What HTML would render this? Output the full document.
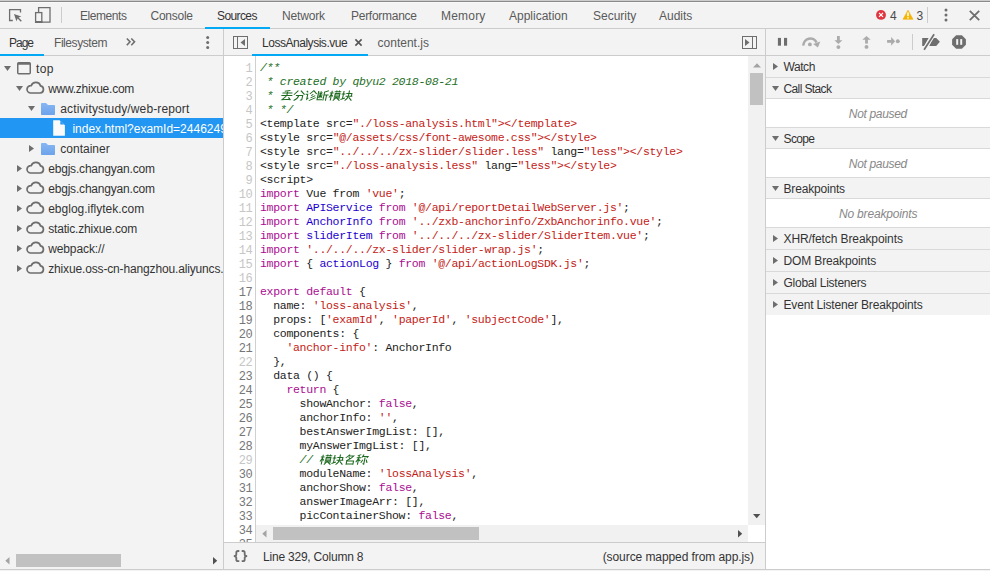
<!DOCTYPE html>
<html><head><meta charset="utf-8">
<style>
*{box-sizing:border-box;margin:0;padding:0}
html,body{width:990px;height:571px;overflow:hidden;background:#f3f3f3;font-family:"Liberation Sans",sans-serif;font-size:12px;color:#333}
.a{position:absolute}
.t{position:absolute;white-space:nowrap;line-height:14px}
.hl{position:absolute;height:1px;background:#ccc}
.vl{position:absolute;width:1px;background:#ccc}
svg{position:absolute;overflow:visible}
#code{position:absolute;left:224px;top:56px;width:524px;height:486px;background:#fff;overflow:hidden}
#gut{position:absolute;left:31px;top:0;width:1px;height:486px;background:#d0d0d0}
.ln{position:absolute;left:0;width:28px;text-align:right;font-family:"Liberation Mono",monospace;font-size:12px;letter-spacing:-0.6px;line-height:14px;margin-top:1px;color:#767676}
.cl{position:absolute;left:36px;white-space:pre;font-family:"Liberation Mono",monospace;font-size:11.5px;letter-spacing:-0.3px;line-height:14px;color:#222}
.c{color:#236e25;font-style:italic}
.s{color:#c41a16}
.k{color:#aa0d91}
.v{color:#1c00cf}
.sec{position:absolute;left:766px;width:224px;height:22px;background:#f3f3f3;border-bottom:1px solid #d9d9d9}
.sec .t{left:19px;top:4px;color:#333}
.emp{position:absolute;left:766px;width:224px;height:29px;line-height:28px;background:#fff;border-bottom:1px solid #d9d9d9;text-align:center;font-style:italic;color:#888}
</style></head><body>
<div class="a" style="left:0;top:0;width:990px;height:1px;background:#cdcdcd"></div>
<div class="a" style="left:0;top:1px;width:990px;height:1px;background:#8a8a8a"></div>
<div class="a" style="left:0;top:2px;width:990px;height:1px;background:#f9f9f9"></div>
<div class="hl" style="left:0;top:28px;width:990px"></div>

<!-- inspect / device icons -->
<svg style="left:9px;top:9px" width="14" height="14"><path d="M3.8,11.5 H0.6 V0.6 H11.5 V3.6" fill="none" stroke="#6e6e6e" stroke-width="1.3"/><path d="M5,5 L12.3,7.4 L9.6,8.6 L12.8,11.8 L11.8,12.8 L8.6,9.6 L7.4,12.3 Z" fill="#6e6e6e"/></svg>
<svg style="left:35px;top:7px" width="16" height="16"><path d="M3.6,5.5 V0.6 H15 V15.2 H7" fill="none" stroke="#6e6e6e" stroke-width="1.3"/><rect x="0.6" y="5.6" width="6.2" height="9.6" fill="none" stroke="#6e6e6e" stroke-width="1.3"/><rect x="0" y="14" width="7.4" height="2" fill="#6e6e6e"/></svg>
<div class="vl" style="left:61px;top:7px;height:16px"></div>

<div class="t" style="left:80px;top:9px;color:#5a5a5a;letter-spacing:-0.43px">Elements</div>
<div class="t" style="left:150.5px;top:9px;color:#5a5a5a;letter-spacing:-0.25px">Console</div>
<div class="t" style="left:217px;top:9px;color:#333;letter-spacing:-0.60px">Sources</div>
<div class="t" style="left:282px;top:9px;color:#5a5a5a;letter-spacing:-0.17px">Network</div>
<div class="t" style="left:351px;top:9px;color:#5a5a5a;letter-spacing:-0.27px">Performance</div>
<div class="t" style="left:441px;top:9px;color:#5a5a5a;letter-spacing:0.20px">Memory</div>
<div class="t" style="left:509px;top:9px;color:#5a5a5a">Application</div>
<div class="t" style="left:593px;top:9px;color:#5a5a5a">Security</div>
<div class="t" style="left:659px;top:9px;color:#5a5a5a">Audits</div>
<div class="a" style="left:205px;top:27px;width:65px;height:2px;background:#03a9f4"></div>

<!-- errors/warnings -->
<svg style="left:876px;top:10px" width="11" height="11"><circle cx="5" cy="4.9" r="4.95" fill="#e0353e"/><path d="M3,2.9 L7,6.9 M7,2.9 L3,6.9" stroke="#fff" stroke-width="1.2"/></svg>
<div class="t" style="left:890px;top:9px;color:#4a4a4a">4</div>
<svg style="left:903px;top:10px" width="11" height="10"><path d="M5,0.2 L10,9.3 H0 Z" fill="#f4b400" stroke="#f4b400" stroke-width="0.6" stroke-linejoin="round"/><path d="M5,2.6 V6.3 M5,7.3 V8.4" stroke="#fff" stroke-width="1.6"/></svg>
<div class="t" style="left:916.6px;top:9px;color:#4a4a4a">3</div>
<div class="vl" style="left:927px;top:7px;height:16px"></div>
<svg style="left:944px;top:8px" width="4" height="14"><circle cx="2" cy="2" r="1.5" fill="#6e6e6e"/><circle cx="2" cy="7" r="1.5" fill="#6e6e6e"/><circle cx="2" cy="12" r="1.5" fill="#6e6e6e"/></svg>
<svg style="left:969px;top:10px" width="11" height="11"><path d="M0.8,0.8 L10.2,10.2 M10.2,0.8 L0.8,10.2" stroke="#6e6e6e" stroke-width="1.8"/></svg>

<!-- second row -->
<div class="hl" style="left:0;top:55px;width:990px"></div>
<div class="vl" style="left:223px;top:29px;height:540px"></div>
<div class="vl" style="left:765px;top:29px;height:540px"></div>
<div class="t" style="left:9px;top:36px;color:#333;letter-spacing:-1.00px">Page</div>
<div class="t" style="left:54px;top:36px;color:#5a5a5a;letter-spacing:-0.44px">Filesystem</div>
<div class="a" style="left:0;top:54px;width:44px;height:2px;background:#03a9f4"></div>
<svg style="left:126px;top:38px" width="10" height="8"><path d="M0.8,0.5 L4,3.8 L0.8,7.2 M5.3,0.5 L8.5,3.8 L5.3,7.2" fill="none" stroke="#6e6e6e" stroke-width="1.6"/></svg>
<svg style="left:206px;top:36px" width="4" height="13"><circle cx="1.7" cy="1.6" r="1.5" fill="#6e6e6e"/><circle cx="1.7" cy="6.4" r="1.5" fill="#6e6e6e"/><circle cx="1.7" cy="11.4" r="1.5" fill="#6e6e6e"/></svg>

<!-- editor tabs -->
<svg style="left:233px;top:36px" width="16" height="14"><rect x="0.5" y="0.5" width="14" height="12" fill="none" stroke="#6e6e6e" stroke-width="1"/><path d="M4.5,0.5 V12.5" stroke="#6e6e6e" stroke-width="1"/><path d="M12,3 V10 L7.5,6.5 Z" fill="#6e6e6e"/></svg>
<div class="t" style="left:262px;top:36px;color:#333;letter-spacing:-0.47px">LossAnalysis.vue</div>
<svg style="left:355px;top:38.5px" width="8" height="8"><path d="M0.4,0.4 L6.6,6.6 M6.6,0.4 L0.4,6.6" stroke="#555" stroke-width="1.6"/></svg>
<div class="t" style="left:377.6px;top:36px;color:#5a5a5a">content.js</div>
<div class="a" style="left:252px;top:54px;width:116px;height:2px;background:#03a9f4"></div>
<svg style="left:742px;top:36px" width="16" height="14"><rect x="0.5" y="0.5" width="14" height="12" fill="none" stroke="#6e6e6e" stroke-width="1"/><path d="M10.5,0.5 V12.5" stroke="#6e6e6e" stroke-width="1"/><path d="M3,3 V10 L7.5,6.5 Z" fill="#6e6e6e"/></svg>

<!-- debugger toolbar -->
<div class="vl" style="left:912px;top:34px;height:16px"></div>
<svg style="left:766px;top:28px" width="224" height="27" viewBox="766 28 224 27">
<rect x="777.9" y="37.9" width="3.1" height="7.8" fill="#6e6e6e"/><rect x="784" y="37.9" width="3.1" height="7.8" fill="#6e6e6e"/>
<path d="M803.4,45.6 A6.9,6.9 0 0 1 816.6,42.6" fill="none" stroke="#ababab" stroke-width="2.5"/>
<path d="M813.2,43.9 L820.3,41.6 L817.9,47.4 Z" fill="#ababab"/>
<circle cx="809.9" cy="44.4" r="1.9" fill="#ababab"/>
<path d="M838.4,36 V41" stroke="#ababab" stroke-width="2.8"/><path d="M834.4,40.2 H842.4 L838.4,44 Z" fill="#ababab"/><circle cx="838.4" cy="47.1" r="1.95" fill="#ababab"/>
<path d="M866.5,39 V43.6" stroke="#ababab" stroke-width="2.8"/><path d="M862.3,39.7 H870.7 L866.5,35.9 Z" fill="#ababab"/><circle cx="866.5" cy="46.9" r="1.95" fill="#ababab"/>
<path d="M887.1,41.4 H892" stroke="#ababab" stroke-width="2.8"/><path d="M891.1,37 V45.7 L895.1,41.35 Z" fill="#ababab"/><circle cx="897.8" cy="41.3" r="1.95" fill="#ababab"/>
<path d="M922.2,37.9 H928.6 L924.1,45.9 H922.2 Z M932.9,37.9 H936.2 L939.9,41.8 L936.2,45.9 H929.2 Z" fill="#6e6e6e"/>
<path d="M934.1,34.2 L924.1,49.7" stroke="#f3f3f3" stroke-width="3.8"/><path d="M934.1,34.2 L924.1,49.7" stroke="#6e6e6e" stroke-width="1.7"/>
<path d="M956.1,35.2 H961.9 L965.9,39.2 V44.8 L961.9,48.8 H956.1 L952.1,44.8 V39.2 Z" fill="#6e6e6e"/>
<rect x="956.2" y="39.1" width="2" height="5.7" fill="#f3f3f3"/><rect x="960.2" y="39.1" width="2" height="5.7" fill="#f3f3f3"/>
</svg>

<!-- left sidebar tree -->
<div class="a" style="left:0;top:0;width:223px;height:571px;overflow:hidden"><svg style="left:4px;top:66px" width="8" height="6"><path d="M0,0 H7 L3.5,5 Z" fill="#6e6e6e"/></svg>
<svg style="left:17px;top:62px" width="14" height="13"><rect x="0.75" y="0.75" width="12.5" height="11" rx="1" fill="none" stroke="#6e6e6e" stroke-width="1.5"/><rect x="0.75" y="0.75" width="12.5" height="2" fill="#6e6e6e"/></svg>
<div class="t" style="left:36px;top:62px;color:#333;letter-spacing:0.40px">top</div>
<svg style="left:16px;top:86px" width="8" height="6"><path d="M0,0 H7 L3.5,5 Z" fill="#6e6e6e"/></svg>
<svg style="left:26px;top:82px" width="19" height="12" viewBox="0 0 19 12"><path d="M4.3,11 H14.2 A3.6,3.6 0 0 0 14.6,3.9 A5,5 0 0 0 5.2,3.6 A3.7,3.7 0 0 0 4.3,11 Z" fill="none" stroke="#6e6e6e" stroke-width="1.7"/></svg>
<div class="t" style="left:48.2px;top:82px;color:#333;letter-spacing:-0.25px">www.zhixue.com</div>
<svg style="left:28px;top:106px" width="8" height="6"><path d="M0,0 H7 L3.5,5 Z" fill="#6e6e6e"/></svg>
<svg style="left:41px;top:103px" width="14" height="12"><defs><linearGradient id="fg109" x1="0" y1="0" x2="0" y2="1"><stop offset="0" stop-color="#86b6f3"/><stop offset="1" stop-color="#6da3eb"/></linearGradient></defs><path d="M0.8,0 H5 L7,2 H13.2 Q14,2 14,2.8 V11.2 Q14,12 13.2,12 H0.8 Q0,12 0,11.2 V0.8 Q0,0 0.8,0 Z" fill="url(#fg109)"/></svg>
<div class="t" style="left:60.3px;top:102px;color:#333;letter-spacing:0.13px">activitystudy/web-report</div>
<div class="a" style="left:0;top:118px;width:223px;height:20px;background:#2196f3"></div>
<svg style="left:53px;top:120px" width="13" height="16"><path d="M0.2,0.3 H6.6 L11.9,5.2 V15.7 H0.2 Z" fill="#fafafa"/><path d="M7.3,0.9 V4.4 H11 Z" fill="#2196f3"/></svg>
<div class="t" style="left:72.4px;top:122px;color:#fff">index.html?examId=2446249</div>
<svg style="left:29px;top:145px" width="6" height="8"><path d="M0,0 V7 L5,3.5 Z" fill="#6e6e6e"/></svg>
<svg style="left:41px;top:143px" width="14" height="12"><defs><linearGradient id="fg149" x1="0" y1="0" x2="0" y2="1"><stop offset="0" stop-color="#86b6f3"/><stop offset="1" stop-color="#6da3eb"/></linearGradient></defs><path d="M0.8,0 H5 L7,2 H13.2 Q14,2 14,2.8 V11.2 Q14,12 13.2,12 H0.8 Q0,12 0,11.2 V0.8 Q0,0 0.8,0 Z" fill="url(#fg149)"/></svg>
<div class="t" style="left:60.3px;top:142px;color:#333">container</div>
<svg style="left:17px;top:165px" width="6" height="8"><path d="M0,0 V7 L5,3.5 Z" fill="#6e6e6e"/></svg>
<svg style="left:26px;top:162px" width="19" height="12" viewBox="0 0 19 12"><path d="M4.3,11 H14.2 A3.6,3.6 0 0 0 14.6,3.9 A5,5 0 0 0 5.2,3.6 A3.7,3.7 0 0 0 4.3,11 Z" fill="none" stroke="#6e6e6e" stroke-width="1.7"/></svg>
<div class="t" style="left:48.2px;top:162px;color:#333;letter-spacing:-0.19px">ebgjs.changyan.com</div>
<svg style="left:17px;top:185px" width="6" height="8"><path d="M0,0 V7 L5,3.5 Z" fill="#6e6e6e"/></svg>
<svg style="left:26px;top:182px" width="19" height="12" viewBox="0 0 19 12"><path d="M4.3,11 H14.2 A3.6,3.6 0 0 0 14.6,3.9 A5,5 0 0 0 5.2,3.6 A3.7,3.7 0 0 0 4.3,11 Z" fill="none" stroke="#6e6e6e" stroke-width="1.7"/></svg>
<div class="t" style="left:48.2px;top:182px;color:#333;letter-spacing:-0.19px">ebgjs.changyan.com</div>
<svg style="left:17px;top:205px" width="6" height="8"><path d="M0,0 V7 L5,3.5 Z" fill="#6e6e6e"/></svg>
<svg style="left:26px;top:202px" width="19" height="12" viewBox="0 0 19 12"><path d="M4.3,11 H14.2 A3.6,3.6 0 0 0 14.6,3.9 A5,5 0 0 0 5.2,3.6 A3.7,3.7 0 0 0 4.3,11 Z" fill="none" stroke="#6e6e6e" stroke-width="1.7"/></svg>
<div class="t" style="left:48.2px;top:202px;color:#333">ebglog.iflytek.com</div>
<svg style="left:17px;top:225px" width="6" height="8"><path d="M0,0 V7 L5,3.5 Z" fill="#6e6e6e"/></svg>
<svg style="left:26px;top:222px" width="19" height="12" viewBox="0 0 19 12"><path d="M4.3,11 H14.2 A3.6,3.6 0 0 0 14.6,3.9 A5,5 0 0 0 5.2,3.6 A3.7,3.7 0 0 0 4.3,11 Z" fill="none" stroke="#6e6e6e" stroke-width="1.7"/></svg>
<div class="t" style="left:48.2px;top:222px;color:#333;letter-spacing:-0.19px">static.zhixue.com</div>
<svg style="left:17px;top:245px" width="6" height="8"><path d="M0,0 V7 L5,3.5 Z" fill="#6e6e6e"/></svg>
<svg style="left:26px;top:242px" width="19" height="12" viewBox="0 0 19 12"><path d="M4.3,11 H14.2 A3.6,3.6 0 0 0 14.6,3.9 A5,5 0 0 0 5.2,3.6 A3.7,3.7 0 0 0 4.3,11 Z" fill="none" stroke="#6e6e6e" stroke-width="1.7"/></svg>
<div class="t" style="left:48.2px;top:242px;color:#333;letter-spacing:-0.11px">webpack://</div>
<svg style="left:17px;top:265px" width="6" height="8"><path d="M0,0 V7 L5,3.5 Z" fill="#6e6e6e"/></svg>
<svg style="left:26px;top:262px" width="19" height="12" viewBox="0 0 19 12"><path d="M4.3,11 H14.2 A3.6,3.6 0 0 0 14.6,3.9 A5,5 0 0 0 5.2,3.6 A3.7,3.7 0 0 0 4.3,11 Z" fill="none" stroke="#6e6e6e" stroke-width="1.7"/></svg>
<div class="t" style="left:48.2px;top:262px;color:#333;letter-spacing:-0.15px">zhixue.oss-cn-hangzhou.aliyuncs.com</div></div>
<!-- left h scrollbar -->
<svg style="left:5px;top:557px" width="5" height="8"><path d="M4.5,0 V7.5 L0.3,3.75 Z" fill="#a3a3a3"/></svg>
<div class="a" style="left:16px;top:554px;width:105px;height:13px;background:#c1c1c1"></div>
<svg style="left:213px;top:557px" width="5" height="8"><path d="M0,0 V7.5 L4.2,3.75 Z" fill="#505050"/></svg>

<!-- editor -->
<div id="code">
<div id="gut"></div>
<svg style="left:55.8px;top:33.5px" width="76" height="12" viewBox="0 0 76 12"><g transform="translate(0,0.2) skewX(-12) translate(2,0) scale(1,0.9)" fill="none" stroke="#1f6b21" stroke-width="1.1"><path transform="translate(0,0)" d="M3,1.2 L8.5,0.3 M1,3 H11 M6,0.8 V6 M0.5,6 H11.5 M5.5,6.5 L2,10.5 L10,10 M8,8 L10.5,11"/><path transform="translate(12,0)" d="M4.5,0.5 L0.8,5 M7,0.5 L11.5,5 M3,5.8 H9.8 V10.2 Q9.8,11.2 8,11 M6,5.8 Q5.6,9.5 1.8,11.5"/><path transform="translate(24,0)" d="M1,0.8 L2.6,2.4 M0.5,4.5 H2.6 V10 L4,8.6 M8,0.5 L4.6,4.2 M8,0.5 L11.5,4.2 M8.2,4.6 L6.4,6 M10.4,6 L6.2,8.6 M11.2,8.2 L5,11.6"/><path transform="translate(36,0)" d="M1,1 V10.5 H6 M2,2.8 L3,4 M5,2.6 L4,4 M1.6,5.2 H5.6 M3.5,1.2 V9 M3.5,5.6 L1.6,8.4 M3.5,5.6 L5.6,8.2 M11,0.6 L7,2 V11.4 M7,5.2 H11.6 M9.6,5.2 V11.6"/><path transform="translate(48,0)" d="M0.5,3.2 H4.2 M2.4,0.5 V11.5 M2.4,4 L0.5,8.2 M2.6,5 L4.2,7 M5,1.6 H11.6 M7,0.4 V2.6 M9.6,0.4 V2.6 M6,3.6 H10.6 V7.2 H6 Z M6,5.4 H10.6 M5,8.6 H11.6 M8.3,7.2 L5,11.6 M8.3,8.6 L11.6,11.6"/><path transform="translate(60,0)" d="M0.5,4.2 H4.2 M2.3,1 V9.6 M0.4,10.4 L4.6,8.6 M5,3.6 H10.6 V6.6 M4.8,6.6 H11.6 M7.6,0.4 V6.6 Q7.4,9.6 4.8,11.6 M8.2,7.8 L11.6,11.6"/></g></svg>
<svg style="left:95.4px;top:397.5px" width="52" height="12" viewBox="0 0 52 12"><g transform="translate(0,0.2) skewX(-12) translate(2,0) scale(1,0.9)" fill="none" stroke="#1f6b21" stroke-width="1.1"><path transform="translate(0,0)" d="M0.5,3.2 H4.2 M2.4,0.5 V11.5 M2.4,4 L0.5,8.2 M2.6,5 L4.2,7 M5,1.6 H11.6 M7,0.4 V2.6 M9.6,0.4 V2.6 M6,3.6 H10.6 V7.2 H6 Z M6,5.4 H10.6 M5,8.6 H11.6 M8.3,7.2 L5,11.6 M8.3,8.6 L11.6,11.6"/><path transform="translate(12,0)" d="M0.5,4.2 H4.2 M2.3,1 V9.6 M0.4,10.4 L4.6,8.6 M5,3.6 H10.6 V6.6 M4.8,6.6 H11.6 M7.6,0.4 V6.6 Q7.4,9.6 4.8,11.6 M8.2,7.8 L11.6,11.6"/><path transform="translate(24,0)" d="M5.2,0.5 L1.5,4.2 M4,2 H9.2 Q7,5.5 2.5,7.4 M4.4,3.6 L6.6,5.4 M3.2,7.6 V11.6 M3.2,7.6 H10 V11.6 M3.2,11 H10"/><path transform="translate(36,0)" d="M4.4,0.5 L1,1.6 M0.5,4 H5 M2.6,1.4 V11.6 M2.6,4.6 L0.4,9 M2.7,5.6 L4.8,7.6 M7.2,0.4 L5.6,3.6 M6.6,2.6 H11.6 L10.6,4.2 M8.8,3.6 V11 L7.6,10.4 M7,6.2 L5.6,9.6 M10.4,6 L11.8,9.6"/></g></svg>
<div class="ln" style="top:5px;color:#c6c6c6">1</div>
<div class="cl" style="top:5px"><span class="c">/**</span></div>
<div class="ln" style="top:19px;color:#c6c6c6">2</div>
<div class="cl" style="top:19px"><span class="c"> * created by qbyu2 2018-08-21</span></div>
<div class="ln" style="top:33px;color:#c6c6c6">3</div>
<div class="cl" style="top:33px"><span class="c"> * </span></div>
<div class="ln" style="top:47px;color:#c6c6c6">4</div>
<div class="cl" style="top:47px"><span class="c"> * */</span></div>
<div class="ln" style="top:61px;color:#c6c6c6">5</div>
<div class="cl" style="top:61px">&lt;template src=<span class="s">"./loss-analysis.html"&gt;&lt;/template&gt;</span></div>
<div class="ln" style="top:75px;color:#c6c6c6">6</div>
<div class="cl" style="top:75px">&lt;style src=<span class="s">"@/assets/css/font-awesome.css"&gt;&lt;/style&gt;</span></div>
<div class="ln" style="top:89px;color:#c6c6c6">7</div>
<div class="cl" style="top:89px">&lt;style src=<span class="s">"../../../zx-slider/slider.less"</span> lang=<span class="s">"less"&gt;&lt;/style&gt;</span></div>
<div class="ln" style="top:103px;color:#c6c6c6">8</div>
<div class="cl" style="top:103px">&lt;style src=<span class="s">"./loss-analysis.less"</span> lang=<span class="s">"less"&gt;&lt;/style&gt;</span></div>
<div class="ln" style="top:117px;color:#c6c6c6">9</div>
<div class="cl" style="top:117px">&lt;script&gt;</div>
<div class="ln" style="top:131px;color:#c6c6c6">10</div>
<div class="cl" style="top:131px"><span class="k">import</span> Vue from <span class="s">'vue'</span>;</div>
<div class="ln" style="top:145px;color:#c6c6c6">11</div>
<div class="cl" style="top:145px"><span class="k">import</span> <span class="v">APIService</span> <span class="k">from</span> <span class="s">'@/api/reportDetailWebServer.js'</span>;</div>
<div class="ln" style="top:159px;color:#c6c6c6">12</div>
<div class="cl" style="top:159px"><span class="k">import</span> <span class="v">AnchorInfo</span> <span class="k">from</span> <span class="s">'../zxb-anchorinfo/ZxbAnchorinfo.vue'</span>;</div>
<div class="ln" style="top:173px;color:#c6c6c6">13</div>
<div class="cl" style="top:173px"><span class="k">import</span> <span class="v">sliderItem</span> <span class="k">from</span> <span class="s">'../../../zx-slider/SliderItem.vue'</span>;</div>
<div class="ln" style="top:187px;color:#c6c6c6">14</div>
<div class="cl" style="top:187px"><span class="k">import</span> <span class="s">'../../../zx-slider/slider-wrap.js'</span>;</div>
<div class="ln" style="top:201px;color:#c6c6c6">15</div>
<div class="cl" style="top:201px"><span class="k">import</span> { <span class="v">actionLog</span> } <span class="k">from</span> <span class="s">'@/api/actionLogSDK.js'</span>;</div>
<div class="ln" style="top:215px;color:#c6c6c6">16</div>
<div class="ln" style="top:229px">17</div>
<div class="cl" style="top:229px"><span class="k">export</span> <span class="k">default</span> {</div>
<div class="ln" style="top:243px">18</div>
<div class="cl" style="top:243px">  name: <span class="s">'loss-analysis'</span>,</div>
<div class="ln" style="top:257px">19</div>
<div class="cl" style="top:257px">  props: [<span class="s">'examId'</span>, <span class="s">'paperId'</span>, <span class="s">'subjectCode'</span>],</div>
<div class="ln" style="top:271px">20</div>
<div class="cl" style="top:271px">  components: {</div>
<div class="ln" style="top:285px">21</div>
<div class="cl" style="top:285px">    <span class="s">'anchor-info'</span>: AnchorInfo</div>
<div class="ln" style="top:299px;color:#c6c6c6">22</div>
<div class="cl" style="top:299px">  },</div>
<div class="ln" style="top:313px">23</div>
<div class="cl" style="top:313px">  data () {</div>
<div class="ln" style="top:327px">24</div>
<div class="cl" style="top:327px">    <span class="k">return</span> {</div>
<div class="ln" style="top:341px">25</div>
<div class="cl" style="top:341px">      showAnchor: <span class="k">false</span>,</div>
<div class="ln" style="top:355px">26</div>
<div class="cl" style="top:355px">      anchorInfo: <span class="s">''</span>,</div>
<div class="ln" style="top:369px">27</div>
<div class="cl" style="top:369px">      bestAnswerImgList: [],</div>
<div class="ln" style="top:383px">28</div>
<div class="cl" style="top:383px">      myAnswerImgList: [],</div>
<div class="ln" style="top:397px;color:#c6c6c6">29</div>
<div class="cl" style="top:397px">      <span class="c">// </span></div>
<div class="ln" style="top:411px">30</div>
<div class="cl" style="top:411px">      moduleName: <span class="s">'lossAnalysis'</span>,</div>
<div class="ln" style="top:425px">31</div>
<div class="cl" style="top:425px">      anchorShow: <span class="k">false</span>,</div>
<div class="ln" style="top:439px">32</div>
<div class="cl" style="top:439px">      answerImageArr: [],</div>
<div class="ln" style="top:453px">33</div>
<div class="cl" style="top:453px">      picContainerShow: <span class="k">false</span>,</div>
<div class="ln" style="top:467px">34</div>
<div class="ln" style="top:481px">35</div>
</div>
<!-- v scrollbar -->
<div class="a" style="left:748px;top:56px;width:17px;height:469px;background:#f1f1f1"></div>
<svg style="left:752.5px;top:62.5px" width="9" height="5"><path d="M0,4.5 H8 L4,0.3 Z" fill="#a3a3a3"/></svg>
<div class="a" style="left:750px;top:73px;width:13px;height:32px;background:#c1c1c1"></div>
<svg style="left:752.8px;top:514px" width="9" height="5"><path d="M0,0 H7.4 L3.7,4.2 Z" fill="#505050"/></svg>
<!-- h scrollbar -->
<div class="a" style="left:256px;top:525px;width:492px;height:17px;background:#f1f1f1"></div>
<div class="a" style="left:748px;top:525px;width:17px;height:17px;background:#fff"></div>
<svg style="left:261.5px;top:529.8px" width="5" height="9"><path d="M4.5,0 V7.4 L0.3,3.7 Z" fill="#a3a3a3"/></svg>
<div class="a" style="left:273px;top:527px;width:206px;height:13px;background:#c1c1c1"></div>
<svg style="left:738px;top:529.8px" width="5" height="9"><path d="M0,0 V7.4 L4.2,3.7 Z" fill="#505050"/></svg>

<!-- status bar -->
<div class="a" style="left:224px;top:542px;width:541px;height:27px;background:#f3f3f3"></div>
<div class="hl" style="left:224px;top:542px;width:541px"></div>
<svg style="left:224px;top:542px" width="40" height="28" viewBox="224 542 40 28"><path d="M239.3,551 H238 Q236.3,551 236.3,552.7 V554.5 Q236.3,556.1 233.8,556.1 Q236.3,556.1 236.3,557.7 V559.5 Q236.3,561.2 238,561.2 H239.3 M241.7,551 H243 Q244.7,551 244.7,552.7 V554.5 Q244.7,556.1 247.2,556.1 Q244.7,556.1 244.7,557.7 V559.5 Q244.7,561.2 243,561.2 H241.7" fill="none" stroke="#6e6e6e" stroke-width="1.8"/></svg>
<div class="t" style="left:263px;top:550px;color:#333;letter-spacing:-0.21px">Line 329, Column 8</div>
<div class="t" style="left:602.7px;top:550px;color:#333;letter-spacing:-0.08px">(source mapped from app.js)</div>

<!-- right sidebar -->
<div class="a" style="left:766px;top:56px;width:224px;height:513px;background:#fff"></div>
<div class="a" style="left:766px;top:56px;width:224px;height:21px;background:#f3f3f3"><svg style="left:7px;top:7px" width="6" height="8"><path d="M0,0 V7 L5,3.5 Z" fill="#6e6e6e"/></svg><div class="t" style="left:17.5px;top:4px;color:#333;letter-spacing:-0.43px">Watch</div></div><div class="hl" style="left:766px;top:77px;width:224px;background:#d9d9d9"></div>
<div class="a" style="left:766px;top:78px;width:224px;height:20px;background:#f3f3f3"><svg style="left:6px;top:8px" width="8" height="6"><path d="M0,0 H7 L3.5,5 Z" fill="#6e6e6e"/></svg><div class="t" style="left:17.5px;top:4px;color:#333;letter-spacing:-0.62px">Call Stack</div></div><div class="hl" style="left:766px;top:98px;width:224px;background:#d9d9d9"></div>
<div class="a" style="left:766px;top:99px;width:224px;height:28px;background:#fff"></div><div class="t" style="left:848.8px;top:107px;color:#888;letter-spacing:-0.33px;font-style:italic">Not paused</div><div class="hl" style="left:766px;top:127px;width:224px;background:#d9d9d9"></div>
<div class="a" style="left:766px;top:128px;width:224px;height:20px;background:#f3f3f3"><svg style="left:6px;top:8px" width="8" height="6"><path d="M0,0 H7 L3.5,5 Z" fill="#6e6e6e"/></svg><div class="t" style="left:17.5px;top:4px;color:#333;letter-spacing:-0.62px">Scope</div></div><div class="hl" style="left:766px;top:148px;width:224px;background:#d9d9d9"></div>
<div class="a" style="left:766px;top:149px;width:224px;height:28px;background:#fff"></div><div class="t" style="left:848.8px;top:157px;color:#888;letter-spacing:-0.33px;font-style:italic">Not paused</div><div class="hl" style="left:766px;top:177px;width:224px;background:#d9d9d9"></div>
<div class="a" style="left:766px;top:178px;width:224px;height:20px;background:#f3f3f3"><svg style="left:6px;top:8px" width="8" height="6"><path d="M0,0 H7 L3.5,5 Z" fill="#6e6e6e"/></svg><div class="t" style="left:17.5px;top:4px;color:#333;letter-spacing:-0.18px">Breakpoints</div></div><div class="hl" style="left:766px;top:198px;width:224px;background:#d9d9d9"></div>
<div class="a" style="left:766px;top:199px;width:224px;height:28px;background:#fff"></div><div class="t" style="left:838.9px;top:207px;color:#888;letter-spacing:-0.17px;font-style:italic">No breakpoints</div><div class="hl" style="left:766px;top:227px;width:224px;background:#d9d9d9"></div>
<div class="a" style="left:766px;top:228px;width:224px;height:21px;background:#f3f3f3"><svg style="left:7px;top:7px" width="6" height="8"><path d="M0,0 V7 L5,3.5 Z" fill="#6e6e6e"/></svg><div class="t" style="left:17.5px;top:4px;color:#333;letter-spacing:-0.10px">XHR/fetch Breakpoints</div></div><div class="hl" style="left:766px;top:249px;width:224px;background:#d9d9d9"></div>
<div class="a" style="left:766px;top:250px;width:224px;height:21px;background:#f3f3f3"><svg style="left:7px;top:7px" width="6" height="8"><path d="M0,0 V7 L5,3.5 Z" fill="#6e6e6e"/></svg><div class="t" style="left:17.5px;top:4px;color:#333;letter-spacing:-0.14px">DOM Breakpoints</div></div><div class="hl" style="left:766px;top:271px;width:224px;background:#d9d9d9"></div>
<div class="a" style="left:766px;top:272px;width:224px;height:21px;background:#f3f3f3"><svg style="left:7px;top:7px" width="6" height="8"><path d="M0,0 V7 L5,3.5 Z" fill="#6e6e6e"/></svg><div class="t" style="left:17.5px;top:4px;color:#333;letter-spacing:-0.25px">Global Listeners</div></div><div class="hl" style="left:766px;top:293px;width:224px;background:#d9d9d9"></div>
<div class="a" style="left:766px;top:294px;width:224px;height:21px;background:#f3f3f3"><svg style="left:7px;top:7px" width="6" height="8"><path d="M0,0 V7 L5,3.5 Z" fill="#6e6e6e"/></svg><div class="t" style="left:17.5px;top:4px;color:#333;letter-spacing:-0.17px">Event Listener Breakpoints</div></div>
<div class="hl" style="left:0;top:569px;width:990px"></div>
</body></html>
